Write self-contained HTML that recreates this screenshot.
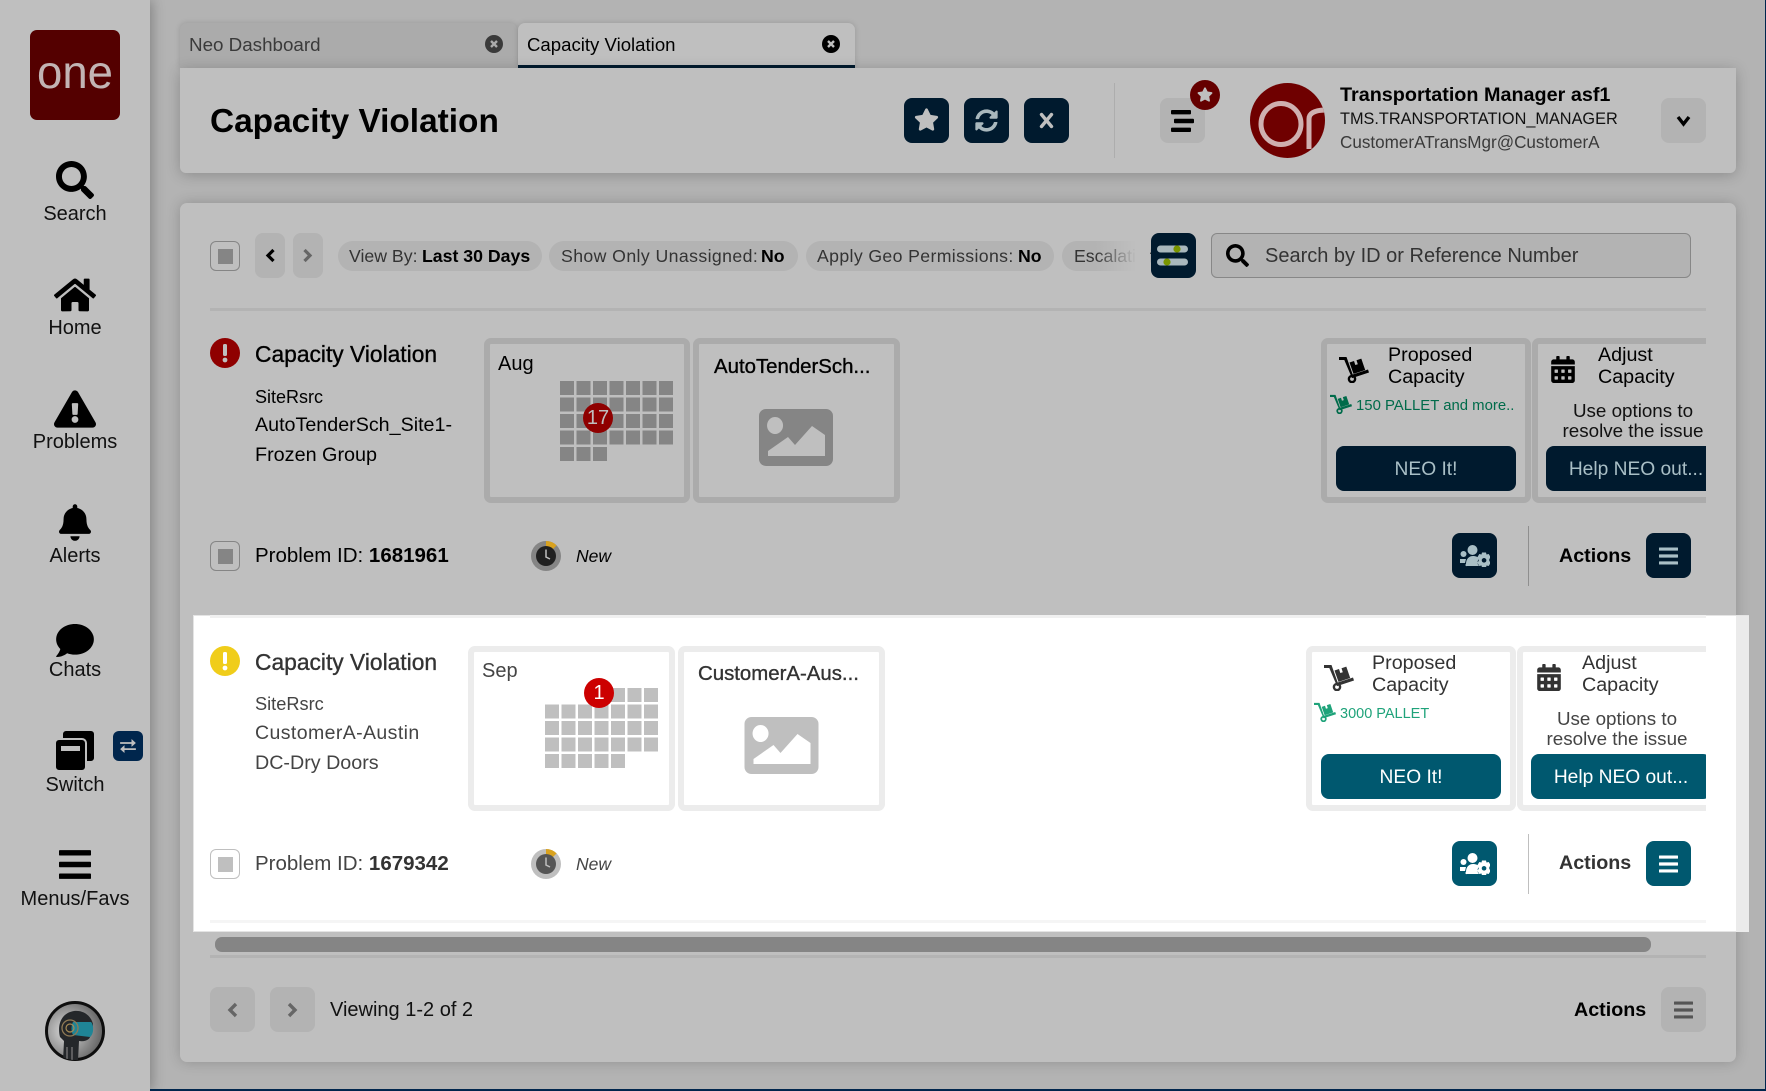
<!DOCTYPE html>
<html><head><meta charset="utf-8"><title>Capacity Violation</title>
<style>
html,body{margin:0;padding:0;width:1766px;height:1091px;overflow:hidden;background:#b3b3b3;font-family:"Liberation Sans",sans-serif;color:#000}
*{box-sizing:border-box}
.a,.t,svg.i{position:absolute}
.t{white-space:nowrap;line-height:30px;height:30px}
.b{font-weight:700}
.nav{text-align:center;width:150px;left:0;font-size:20px;color:#111}
.btn{position:absolute;width:45px;height:45px;border-radius:8px;background:#001a2e}
.gb{position:absolute;width:45px;height:45px;border-radius:8px;background:#b3b3b3}
.chip{position:absolute;height:30px;top:241px;background:#b3b3b3;border-radius:15px}
.ck{position:absolute;width:30px;height:30px;border:1px solid var(--ckb,#858585);border-radius:6px}
.ck:after{content:"";position:absolute;left:7px;top:7px;width:15px;height:15px;background:var(--c,#858585)}
.card{position:absolute;top:338px;height:165px;border:6px solid var(--bd);border-radius:7px}
.r1{--bd:#ababab;--c:#858585;--tx:#000;--tx2:#111;--b:#001a2e;--bt:#a9bfc6;--g:#006b4a;--sep:#8f8f8f;--ckb:#858585}
.r2{--bd:#ececec;--c:#bfbfbf;--tx:#333;--tx2:#444;--b:#00586f;--bt:#fff;--g:#1fa37a;--sep:#bfbfbf;--ckb:#bfbfbf}
.row{position:absolute;left:0;width:1766px;height:300px}
.row .t{color:var(--tx)}
.row .bt{position:absolute;height:45px;width:180px;top:446px;background:var(--b);color:var(--bt);border-radius:8px;text-align:center;font-size:19.200px;line-height:47px;white-space:nowrap}
.row .sq{position:absolute;width:45px;height:45px;border-radius:8px;background:var(--b);top:533px}
.med{-webkit-text-stroke:.35px currentColor}
</style></head><body>
<svg width="0" height="0" style="position:absolute"><defs>
<symbol id="search" viewBox="0 0 512 512"><path d="M505 442.7L405.3 343c-4.5-4.5-10.6-7-17-7H372c27.6-35.3 44-79.7 44-128C416 93.1 322.9 0 208 0S0 93.1 0 208s93.1 208 208 208c48.3 0 92.7-16.4 128-44v16.3c0 6.4 2.5 12.5 7 17l99.7 99.7c9.4 9.4 24.6 9.4 33.9 0l28.3-28.3c9.4-9.4 9.4-24.6.1-34zM208 336c-70.7 0-128-57.2-128-128 0-70.7 57.2-128 128-128 70.7 0 128 57.2 128 128 0 70.7-57.2 128-128 128z"/></symbol>
<symbol id="star" viewBox="0 0 576 512"><path d="M259.3 17.8L194 150.2 47.9 171.5c-26.2 3.8-36.7 36.1-17.7 54.6l105.7 103-25 145.5c-4.5 26.3 23.2 46 46.4 33.7L288 439.6l130.7 68.7c23.2 12.2 50.9-7.4 46.4-33.7l-25-145.5 105.7-103c19-18.5 8.5-50.8-17.7-54.6L382 150.2 316.7 17.8c-11.7-23.6-45.6-23.9-57.4 0z"/></symbol>
<symbol id="dolly" viewBox="0 0 30 27"><path d="M0 1h7.5l6.2 17.5 15.3-5 1 3-17 5.6L5.300 4H0z"/><circle cx="13" cy="23" r="3.100" fill="none" stroke="currentColor" stroke-width="2.400"/><path fill-rule="evenodd" d="M10.500 6.500l4.500-1.500 1.300 4 2.500-.8-1.300-4 4.800-1.600 3.900 11.400-11.700 3.900z"/></symbol>
<symbol id="cal" viewBox="0 0 448 512"><path d="M0 464c0 26.500 21.500 48 48 48h352c26.500 0 48-21.500 48-48V192H0v272zm320-196c0-6.600 5.400-12 12-12h40c6.600 0 12 5.400 12 12v40c0 6.600-5.400 12-12 12h-40c-6.600 0-12-5.400-12-12v-40zm0 128c0-6.600 5.400-12 12-12h40c6.600 0 12 5.400 12 12v40c0 6.600-5.400 12-12 12h-40c-6.600 0-12-5.400-12-12v-40zM192 268c0-6.600 5.400-12 12-12h40c6.600 0 12 5.400 12 12v40c0 6.600-5.400 12-12 12h-40c-6.600 0-12-5.400-12-12v-40zm0 128c0-6.600 5.400-12 12-12h40c6.600 0 12 5.400 12 12v40c0 6.600-5.400 12-12 12h-40c-6.600 0-12-5.400-12-12v-40zM64 268c0-6.600 5.400-12 12-12h40c6.600 0 12 5.400 12 12v40c0 6.600-5.400 12-12 12H76c-6.600 0-12-5.400-12-12v-40zm0 128c0-6.600 5.400-12 12-12h40c6.600 0 12 5.400 12 12v40c0 6.600-5.400 12-12 12H76c-6.600 0-12-5.400-12-12v-40zM400 64h-48V16c0-8.800-7.200-16-16-16h-32c-8.800 0-16 7.200-16 16v48H160V16c0-8.800-7.200-16-16-16h-32c-8.800 0-16 7.200-16 16v48H48C21.500 64 0 85.500 0 112v48h448v-48c0-26.500-21.500-48-48-48z"/></symbol>
<symbol id="img" viewBox="0 0 74 57"><path fill-rule="evenodd" d="M7 0h60a7 7 0 0 1 7 7v43a7 7 0 0 1-7 7H7a7 7 0 0 1-7-7V7a7 7 0 0 1 7-7zM16 8a8 8.500 0 1 0 .1 0zM9 47h57V26L53 17 36 36l-7-8L9 42z"/></symbol>
<symbol id="ug" viewBox="0 0 30 22"><circle cx="3.500" cy="9" r="3"/><circle cx="12.500" cy="5" r="5"/><path d="M0 14h6l-1 4H0zM6 19c0-5 3-8 7-8 3 0 5 1 6 3-2 2-2 5 0 7H7a1 1 0 0 1-1-2z"/><path fill-rule="evenodd" d="M22 7.500h4l.5 2 2.200-.5 2.100 3.500-1.500 1.500v2l1.500 1.500-2.100 3.500-2.200-.5-.5 2h-4l-.5-2-2.200.5-2.100-3.500 1.500-1.500v-2l-1.500-1.500 2.100-3.500 2.200.5zM24 13a2.300 2.300 0 1 0 .1 0z"/></symbol>
<symbol id="bars" viewBox="0 0 20 18"><rect width="20" height="3.400" rx=".5"/><rect y="7.300" width="20" height="3.400" rx=".5"/><rect y="14.600" width="20" height="3.400" rx=".5"/></symbol>
<symbol id="clock" viewBox="0 0 30 30"><circle cx="15" cy="15" r="15" fill="var(--c)"/><path d="M15 0a15 15 0 0 1 10.600 4.400L15 15z" fill="#d9a21f"/><circle cx="15" cy="15" r="10" fill="var(--clk)"/><path d="M15 8.500V16l4 2" fill="none" stroke="#bfbfbf" stroke-width="1.500"/></symbol>
</defs></svg>

<!-- sidebar -->
<div class="a" style="left:0;top:0;width:150px;height:1091px;background:#bfbfbf;box-shadow:2px 0 12px rgba(0,0,0,.28)"></div>
<div class="a" style="left:30px;top:30px;width:90px;height:90px;background:#540000;border-radius:7px"></div>
<svg class="i" style="left:30px;top:30px" width="90" height="90"><text x="7" y="58" font-size="46" fill="#c2b4b4" textLength="76" lengthAdjust="spacingAndGlyphs" font-family="Liberation Sans,sans-serif">one</text></svg>
<svg class="i" style="left:56px;top:161px" width="38" height="38"><use href="#search"/></svg>
<div class="t nav" style="top:199px">Search</div>
<svg class="i" style="left:54px;top:278px" width="42" height="34" viewBox="0 32 576 448"><path d="M280.370 148.260L96 300.110V464a16 16 0 0 0 16 16l112.060-.29a16 16 0 0 0 15.920-16V368a16 16 0 0 1 16-16h64a16 16 0 0 1 16 16v95.640a16 16 0 0 0 16 16.050L464 480a16 16 0 0 0 16-16V300L295.670 148.260a12.190 12.190 0 0 0-15.300 0zM571.600 251.470L488 182.560V44.050a12 12 0 0 0-12-12h-56a12 12 0 0 0-12 12v72.610L318.470 43a48 48 0 0 0-61 0L4.340 251.470a12 12 0 0 0-1.600 16.900l25.500 31A12 12 0 0 0 45.150 301l235.220-193.740a12.190 12.190 0 0 1 15.300 0L530.900 301a12 12 0 0 0 16.900-1.600l25.500-31a12 12 0 0 0-1.700-16.930z"/></svg>
<div class="t nav" style="top:313px">Home</div>
<svg class="i" style="left:54px;top:390px" width="42" height="38" viewBox="0 0 576 512"><path d="M569.517 440.013C587.975 472.007 564.806 512 527.940 512H48.054c-36.937 0-59.999-40.055-41.577-71.987L246.423 23.985c18.467-32.009 64.720-31.951 83.154 0l239.940 416.028zM288 354c-25.405 0-46 20.595-46 46s20.595 46 46 46 46-20.595 46-46-20.595-46-46-46zm-43.673-165.346l7.418 136c.347 6.364 5.609 11.346 11.982 11.346h48.546c6.373 0 11.635-4.982 11.982-11.346l7.418-136c.375-6.874-5.098-12.654-11.982-12.654h-63.383c-6.884 0-12.356 5.780-11.981 12.654z"/></svg>
<div class="t nav" style="top:427px">Problems</div>
<svg class="i" style="left:59px;top:504px" width="32" height="37" viewBox="0 0 448 512"><path d="M224 512c35.320 0 63.970-28.650 63.970-64H160.030c0 35.350 28.650 64 63.970 64zm215.390-149.710c-19.320-20.760-55.470-51.990-55.470-154.290 0-77.700-54.480-139.900-127.940-155.160V32c0-17.670-14.320-32-31.980-32s-31.980 14.330-31.980 32v20.840C118.560 68.100 64.080 130.300 64.080 208c0 102.300-36.150 133.530-55.470 154.290-6 6.450-8.660 14.160-8.610 21.710.11 16.400 12.980 32 32.100 32h383.800c19.120 0 32-15.600 32.100-32 .05-7.550-2.610-15.270-8.610-21.710z"/></svg>
<div class="t nav" style="top:541px">Alerts</div>
<svg class="i" style="left:56px;top:624px" width="38" height="33" viewBox="0 32 512 448"><path d="M256 32C114.600 32 0 125.100 0 240c0 49.600 21.400 95 57 130.700C44.500 421.100 2.700 466 2.200 466.500c-2.200 2.300-2.800 5.700-1.500 8.700S4.800 480 8 480c66.300 0 116-31.800 140.600-51.400 32.700 12.300 69 19.400 107.400 19.400 141.400 0 256-93.100 256-208S397.400 32 256 32z"/></svg>
<div class="t nav" style="top:655px">Chats</div>
<svg class="i" style="left:56px;top:731px" width="38" height="39" viewBox="0 0 38 39"><path d="M10 0h25a3 3 0 0 1 3 3v24a3 3 0 0 1-3 3h-4V12a5 5 0 0 0-5-5H7V3a3 3 0 0 1 3-3z"/><path fill-rule="evenodd" d="M3 9h23a3 3 0 0 1 3 3v24a3 3 0 0 1-3 3H3a3 3 0 0 1-3-3V12a3 3 0 0 1 3-3zM5 15v5h19v-5z"/></svg>
<div class="t nav" style="top:770px">Switch</div>
<div class="a" style="left:113px;top:731px;width:30px;height:30px;background:#00264d;border-radius:6px"></div>
<svg class="i" style="left:119px;top:739px" width="18" height="14" viewBox="0 0 18 16" fill="#bfbfbf"><path d="M0 3.500h13V0l5 4.500L13 9V5.500H0zM18 10.500H5V7l-5 4.500L5 16v-3.500h13z"/></svg>
<svg class="i" style="left:59px;top:850px;" width="32" height="29"><use href="#bars"/></svg>
<div class="t nav" style="top:884px">Menus/Favs</div>
<svg class="i" style="left:45px;top:1001px" width="60" height="60" viewBox="0 0 60 60"><defs><radialGradient id="rg" cx=".35" cy=".5" r=".6"><stop offset="0" stop-color="#dcdcdc"/><stop offset="1" stop-color="#6a6a6a"/></radialGradient><clipPath id="ba"><circle cx="30" cy="30" r="29"/></clipPath></defs><circle cx="30" cy="30" r="28.500" fill="url(#rg)" stroke="#0e0e0e" stroke-width="3"/><g clip-path="url(#ba)"><path d="M15 36c-3-12 1-24 14-26 10-1 17 5 19 13 0 3-1 6-2 9 0 7-6 9-12 8l-1 20H18l1-20z" fill="#24272a"/><path d="M28 21h18c3 3 3 12-1 15l-17-2c-2-4-2-9 0-13z" fill="#1f8596"/><circle cx="25" cy="27" r="8" fill="none" stroke="#8f7a55" stroke-width="1.300"/><circle cx="25" cy="27" r="4" fill="none" stroke="#a68a55" stroke-width="1.200"/><path d="M22 46v14M27 46v14" stroke="#7a7a7a" stroke-width="1.300"/></g></svg>

<!-- tabs -->
<div class="a" style="left:180px;top:23px;width:337px;height:45px;background:#ababab;border-radius:7px 7px 0 0;box-shadow:0 0 6px rgba(0,0,0,.15)"></div>
<div class="t" style="left:189px;top:30px;font-size:18.800px;color:#3a3a3a">Neo Dashboard</div>
<svg class="i" style="left:485px;top:35px" width="18" height="18" viewBox="0 0 18 18"><circle cx="9" cy="9" r="9" fill="#3a3a3a"/><path d="M6 6l6 6M12 6l-6 6" stroke="#ababab" stroke-width="2.400"/></svg>
<div class="a" style="left:518px;top:23px;width:337px;height:45px;background:#bfbfbf;border-radius:7px 7px 0 0;border-bottom:3px solid #001a2e;box-shadow:0 0 6px rgba(0,0,0,.15)"></div>
<div class="t" style="left:527px;top:30px;font-size:18.600px;color:#000">Capacity Violation</div>
<svg class="i" style="left:822px;top:35px" width="18" height="18" viewBox="0 0 18 18"><circle cx="9" cy="9" r="9" fill="#000"/><path d="M6 6l6 6M12 6l-6 6" stroke="#bfbfbf" stroke-width="2.400"/></svg>

<!-- header card -->
<div class="a" style="left:180px;top:68px;width:1556px;height:105px;background:#bfbfbf;border-radius:0 0 6px 6px;box-shadow:0 2px 14px rgba(0,0,0,.22)"></div>
<div class="t b" style="left:210px;top:101px;font-size:33.400px;line-height:41px;height:41px">Capacity Violation</div>
<div class="btn" style="left:904px;top:98px"></div>
<svg class="i" style="left:914px;top:108px" width="25" height="23" fill="#bfbfbf"><use href="#star"/></svg>
<div class="btn" style="left:964px;top:98px"></div>
<svg class="i" style="left:975px;top:109px" width="23" height="23" viewBox="0 0 512 512" fill="#a9b8bd"><path d="M370.720 133.280C339.458 104.008 298.888 87.962 255.848 88c-77.458.068-144.328 53.178-162.791 126.850-1.344 5.363-6.122 9.150-11.651 9.150H24.103c-7.498 0-13.194-6.807-11.807-14.176C33.933 94.924 134.813 8 256 8c66.448 0 126.791 26.136 171.315 68.685L463.030 40.970C478.149 25.851 504 36.559 504 57.941V192c0 13.255-10.745 24-24 24H345.941c-21.382 0-32.090-25.851-16.971-40.971l41.750-41.749zM32 296h134.059c21.382 0 32.090 25.851 16.971 40.971l-41.750 41.750c31.262 29.273 71.835 45.319 114.876 45.280 77.418-.07 144.315-53.144 162.787-126.849 1.344-5.363 6.122-9.150 11.651-9.150h57.304c7.498 0 13.194 6.807 11.807 14.176C478.067 417.076 377.187 504 256 504c-66.448 0-126.791-26.136-171.315-68.685L48.970 471.030C33.851 486.149 8 475.441 8 454.059V320c0-13.255 10.745-24 24-24z"/></svg>
<div class="btn" style="left:1024px;top:98px"></div>
<svg class="i" style="left:1038px;top:112px" width="17" height="17" viewBox="0 0 17 17"><path d="M3.500 2.500l10 12M13.500 2.500l-10 12" stroke="#bfbfbf" stroke-width="3.400" stroke-linecap="round"/></svg>
<div class="a" style="left:1114px;top:83px;width:1px;height:75px;background:#adadad"></div>
<div class="gb" style="left:1160px;top:98px"></div>
<svg class="i" style="left:1171px;top:110px" width="23" height="22" viewBox="0 0 23 22"><rect x="0" y="0" width="20" height="4.400" rx="1"/><rect x="3" y="8.800" width="20" height="4.400" rx="1"/><rect x="0" y="17.600" width="20" height="4.400" rx="1"/></svg>
<div class="a" style="left:1190px;top:80px;width:30px;height:30px;border-radius:50%;background:#650000"></div>
<svg class="i" style="left:1197px;top:87px" width="16" height="15" fill="#bfbfbf"><use href="#star"/></svg>
<svg class="i" style="left:1250px;top:83px" width="75" height="75" viewBox="0 0 75 75"><defs><clipPath id="av"><circle cx="37.500" cy="37.500" r="37.500"/></clipPath></defs><circle cx="37.500" cy="37.500" r="37.500" fill="#6f0000"/><g clip-path="url(#av)" fill="none" stroke="#cfb0b0" stroke-width="5"><ellipse cx="31" cy="41" rx="20" ry="20.500"/><path d="M59 66V36c0-6 6-9 18-9"/></g></svg>
<div class="t b" style="left:1340px;top:80px;font-size:19.800px">Transportation Manager asf1</div>
<div class="t" style="left:1340px;top:104px;font-size:16.300px;color:#111">TMS.TRANSPORTATION_MANAGER</div>
<div class="t" style="left:1340px;top:128px;font-size:17.100px;color:#3a3a3a">CustomerATransMgr@CustomerA</div>
<div class="gb" style="left:1661px;top:98px"></div>
<svg class="i" style="left:1676px;top:115px" width="15" height="12" viewBox="0 0 15 12"><path d="M2 2l5.500 7L13 2" fill="none" stroke="#000" stroke-width="3.400"/></svg>

<!-- main card -->
<div class="a" style="left:180px;top:203px;width:1556px;height:859px;background:#bfbfbf;border-radius:7px;box-shadow:0 0 14px rgba(0,0,0,.2)"></div>
<div class="ck" style="left:210px;top:241px"></div>
<div class="gb" style="left:255px;top:233px;width:30px"></div>
<svg class="i" style="left:265px;top:248px" width="11" height="15" viewBox="0 0 11 15"><path d="M8.500 2L3 7.500 8.500 13" fill="none" stroke="#000" stroke-width="3.200"/></svg>
<div class="gb" style="left:293px;top:233px;width:30px"></div>
<svg class="i" style="left:302px;top:248px" width="11" height="15" viewBox="0 0 11 15"><path d="M2.500 2L8 7.500 2.500 13" fill="none" stroke="#666" stroke-width="3.200"/></svg>
<div class="chip" style="left:338px;width:204px"></div>
<div class="t" style="left:349px;top:241px;font-size:17.700px;color:#333">View By:</div>
<div class="t b" style="left:422px;top:241px;font-size:17.700px">Last 30 Days</div>
<div class="chip" style="left:549px;width:249px"></div>
<div class="t" style="left:561px;top:241px;font-size:17.700px;color:#333;letter-spacing:.4px">Show Only Unassigned:</div>
<div class="t b" style="left:761px;top:241px;font-size:17.700px">No</div>
<div class="chip" style="left:806px;width:248px"></div>
<div class="t" style="left:817px;top:241px;font-size:17.700px;color:#333;letter-spacing:.36px">Apply Geo Permissions:</div>
<div class="t b" style="left:1018px;top:241px;font-size:17.700px">No</div>
<div class="chip" style="left:1062px;width:90px"></div>
<div class="t" style="left:1074px;top:241px;font-size:17.700px;color:#333">Escalation</div>
<div class="a" style="left:1095px;top:238px;width:55px;height:36px;background:linear-gradient(90deg,rgba(191,191,191,0),#bfbfbf 75%)"></div>
<div class="btn" style="left:1151px;top:233px"></div>
<svg class="i" style="left:1156px;top:242px" width="35" height="27" viewBox="0 0 35 27"><rect x="1" y="3.500" width="31" height="7" rx="3.500" fill="#a9b8bd"/><circle cx="21" cy="7" r="3.600" fill="#7a9500"/><rect x="1" y="16.500" width="31" height="7" rx="3.500" fill="#a9b8bd"/><circle cx="11" cy="20" r="3.600" fill="#7a9500"/></svg>
<div class="a" style="left:1211px;top:233px;width:480px;height:45px;background:#b3b3b3;border:1px solid #878787;border-radius:6px"></div>
<svg class="i" style="left:1226px;top:244px" width="23" height="23"><use href="#search"/></svg>
<div class="t" style="left:1265px;top:241px;font-size:20px;color:#333">Search by ID or Reference Number</div>
<div class="a" style="left:210px;top:308px;width:1496px;height:3px;background:#b3b3b3"></div>

<!-- row 1 -->
<div class="row r1" style="top:0;--clk:#202020">
<svg class="i" style="left:210px;top:338px" width="30" height="30" viewBox="0 0 30 30"><circle cx="15" cy="15" r="15" fill="#8f0000"/><rect x="13" y="6" width="4" height="12" rx="1.500" fill="#bfbfbf"/><circle cx="15" cy="22" r="2.400" fill="#bfbfbf"/></svg>
<div class="t med" style="left:255px;top:339px;font-size:22.800px">Capacity Violation</div>
<div class="t" style="left:255px;top:382px;font-size:18px">SiteRsrc</div>
<div class="t" style="left:255px;top:410px;font-size:19.700px">AutoTenderSch_Site1-</div>
<div class="t" style="left:255px;top:440px;font-size:19.800px">Frozen Group</div>
<div class="card" style="left:484px;width:206px"></div>
<div class="t" style="left:498px;top:349px;font-size:20px">Aug</div>
<svg class="i" style="left:560px;top:381px" width="116" height="82"><defs><pattern id="pa" width="16.500" height="16.500" patternUnits="userSpaceOnUse"><rect width="14" height="14" fill="#858585"/></pattern></defs><rect width="115.500" height="66" fill="url(#pa)"/><rect y="66" width="49.500" height="16.500" fill="url(#pa)"/></svg>
<div class="a" style="left:583px;top:403px;width:30px;height:30px;border-radius:50%;background:#8f0000;color:#bfbfbf;text-align:center;font-size:20px;line-height:30px">17</div>
<div class="card" style="left:693px;width:207px"></div>
<div class="t med" style="left:714px;top:352px;font-size:20.400px">AutoTenderSch...</div>
<svg class="i" style="left:759px;top:409px;fill:var(--c)" width="74" height="57"><use href="#img"/></svg>
<div class="card" style="left:1321px;width:210px"></div>
<svg class="i" style="left:1339px;top:356px;fill:var(--tx);color:var(--tx)" width="30" height="27"><use href="#dolly"/></svg>
<div class="t" style="left:1388px;top:340px;font-size:19.700px">Proposed</div>
<div class="t" style="left:1388px;top:362px;font-size:19.700px">Capacity</div>
<svg class="i" style="left:1330px;top:394px;fill:var(--g);color:var(--g)" width="22" height="20"><use href="#dolly"/></svg>
<div class="t" style="left:1356px;top:391px;font-size:14.900px;color:var(--g)">150 PALLET and more..</div>
<div class="bt" style="left:1336px">NEO It!</div>
<div class="a" style="left:1532px;top:338px;width:174px;height:165px;overflow:hidden">
<div class="card" style="left:0;top:0;width:220px"></div>
<div class="bt" style="left:14px;top:108px">Help NEO out...</div>
</div>
<svg class="i" style="left:1551px;top:356px;fill:var(--tx)" width="24" height="27"><use href="#cal"/></svg>
<div class="t" style="left:1598px;top:340px;font-size:19.700px">Adjust</div>
<div class="t" style="left:1598px;top:362px;font-size:19.700px">Capacity</div>
<div class="t" style="left:1533px;width:200px;text-align:center;top:396px;font-size:18.800px;color:var(--tx2)">Use options to</div>
<div class="t" style="left:1533px;width:200px;text-align:center;top:416px;font-size:18.800px;color:var(--tx2)">resolve the issue</div>
<div class="ck" style="left:210px;top:541px"></div>
<div class="t" style="left:255px;top:541px;font-size:20.500px">Problem ID: <span class="b" style="font-size:20.500px">1681961</span></div>
<svg class="i" style="left:531px;top:541px" width="30" height="30"><use href="#clock"/></svg>
<div class="t" style="left:576px;top:541px;font-size:17.500px;font-style:italic">New</div>
<div class="sq" style="left:1452px"></div>
<svg class="i" style="left:1460px;top:545px;fill:var(--bt)" width="30" height="22"><use href="#ug"/></svg>
<div class="a" style="left:1528px;top:526px;width:1px;height:60px;background:var(--sep)"></div>
<div class="t b" style="left:1559px;top:541px;font-size:19.700px">Actions</div>
<div class="sq" style="left:1646px"></div>
<svg class="i" style="left:1659px;top:547px;fill:var(--bt)" width="19" height="18"><use href="#bars"/></svg>
</div>

<!-- highlight -->
<div class="a" style="left:193px;top:615px;width:1556px;height:317px;background:#fff;box-shadow:inset 0 0 0 1px #e4e4e4"></div>
<div class="a" style="left:1736px;top:616px;width:13px;height:316px;background:#ebebeb"></div>
<div class="a" style="left:210px;top:615px;width:1496px;height:3px;background:#f0f0f0"></div>

<!-- row 2 -->
<div class="row r2" style="top:308px;--clk:#555">
<svg class="i" style="left:210px;top:338px" width="30" height="30" viewBox="0 0 30 30"><circle cx="15" cy="15" r="15" fill="#f0cd1a"/><rect x="13" y="6" width="4" height="12" rx="1.500" fill="#fff"/><circle cx="15" cy="22" r="2.400" fill="#fff"/></svg>
<div class="t med" style="left:255px;top:339px;font-size:22.800px">Capacity Violation</div>
<div class="t" style="left:255px;top:381px;font-size:18.200px;color:#444">SiteRsrc</div>
<div class="t" style="left:255px;top:410px;font-size:19.500px;color:#444;letter-spacing:.4px">CustomerA-Austin</div>
<div class="t" style="left:255px;top:440px;font-size:19.700px;color:#444">DC-Dry Doors</div>
<div class="card" style="left:468px;width:207px"></div>
<div class="t" style="left:482px;top:348px;font-size:20px;color:#444">Sep</div>
<svg class="i" style="left:545px;top:380px" width="116" height="82"><defs><pattern id="pb" width="16.500" height="16.500" patternUnits="userSpaceOnUse"><rect width="14" height="14" fill="#bfbfbf"/></pattern></defs><rect x="49.500" width="66" height="16.500" fill="url(#pb)"/><rect y="16.500" width="115.500" height="49.500" fill="url(#pb)"/><rect y="66" width="82.500" height="16.500" fill="url(#pb)"/></svg>
<div class="a" style="left:584px;top:370px;width:30px;height:30px;border-radius:50%;background:#cc0000;color:#fff;text-align:center;font-size:20px;line-height:30px">1</div>
<div class="card" style="left:678px;width:207px"></div>
<div class="t med" style="left:698px;top:351px;font-size:20.400px">CustomerA-Aus...</div>
<svg class="i" style="left:744px;top:409px;fill:var(--c)" width="75" height="57"><use href="#img"/></svg>
<div class="card" style="left:1306px;width:210px"></div>
<svg class="i" style="left:1324px;top:356px;fill:var(--tx);color:var(--tx)" width="30" height="27"><use href="#dolly"/></svg>
<div class="t" style="left:1372px;top:340px;font-size:19.700px">Proposed</div>
<div class="t" style="left:1372px;top:362px;font-size:19.700px">Capacity</div>
<svg class="i" style="left:1314px;top:394px;fill:var(--g);color:var(--g)" width="22" height="20"><use href="#dolly"/></svg>
<div class="t" style="left:1340px;top:391px;font-size:14.500px;color:var(--g)">3000 PALLET</div>
<div class="bt" style="left:1321px">NEO It!</div>
<div class="a" style="left:1517px;top:338px;width:189px;height:165px;overflow:hidden">
<div class="card" style="left:0;top:0;width:240px"></div>
<div class="bt" style="left:14px;top:108px">Help NEO out...</div>
</div>
<svg class="i" style="left:1537px;top:356px;fill:var(--tx)" width="24" height="27"><use href="#cal"/></svg>
<div class="t" style="left:1582px;top:340px;font-size:19.700px">Adjust</div>
<div class="t" style="left:1582px;top:362px;font-size:19.700px">Capacity</div>
<div class="t" style="left:1517px;width:200px;text-align:center;top:396px;font-size:18.800px;color:var(--tx2)">Use options to</div>
<div class="t" style="left:1517px;width:200px;text-align:center;top:416px;font-size:18.800px;color:var(--tx2)">resolve the issue</div>
<div class="ck" style="left:210px;top:541px"></div>
<div class="t" style="left:255px;top:541px;font-size:20.500px;color:#444">Problem ID: <span class="b" style="font-size:20.500px;color:#333">1679342</span></div>
<svg class="i" style="left:531px;top:541px" width="30" height="30"><use href="#clock"/></svg>
<div class="t" style="left:576px;top:541px;font-size:17.500px;font-style:italic;color:#444">New</div>
<div class="sq" style="left:1452px"></div>
<svg class="i" style="left:1460px;top:545px;fill:var(--bt)" width="30" height="22"><use href="#ug"/></svg>
<div class="a" style="left:1528px;top:526px;width:1px;height:60px;background:var(--sep)"></div>
<div class="t b" style="left:1559px;top:540px;font-size:19.700px">Actions</div>
<div class="sq" style="left:1646px"></div>
<svg class="i" style="left:1659px;top:547px;fill:var(--bt)" width="19" height="18"><use href="#bars"/></svg>
</div>
<div class="a" style="left:210px;top:920px;width:1496px;height:3px;background:#f5f5f5"></div>

<!-- scrollbar + footer -->
<div class="a" style="left:215px;top:937px;width:1436px;height:15px;background:#858585;border-radius:7px"></div>
<div class="a" style="left:210px;top:955px;width:1496px;height:3px;background:#b3b3b3"></div>
<div class="gb" style="left:210px;top:987px"></div>
<svg class="i" style="left:226px;top:1002px" width="13" height="16" viewBox="0 0 13 16"><path d="M10 2L4 8l6 6" fill="none" stroke="#666" stroke-width="3.400"/></svg>
<div class="gb" style="left:270px;top:987px"></div>
<svg class="i" style="left:286px;top:1002px" width="13" height="16" viewBox="0 0 13 16"><path d="M3 2l6 6-6 6" fill="none" stroke="#666" stroke-width="3.400"/></svg>
<div class="t" style="left:330px;top:995px;font-size:20px;color:#111">Viewing 1-2 of 2</div>
<div class="t b" style="left:1574px;top:995px;font-size:19.700px">Actions</div>
<div class="gb" style="left:1661px;top:987px"></div>
<svg class="i" style="left:1674px;top:1001px;fill:#555" width="19" height="18"><use href="#bars"/></svg>

<!-- window edges -->
<div class="a" style="left:150px;top:1089px;width:1616px;height:2px;background:#00264d"></div>
<div class="a" style="left:1765px;top:0;width:1px;height:1091px;background:#00264d"></div>
</body></html>
